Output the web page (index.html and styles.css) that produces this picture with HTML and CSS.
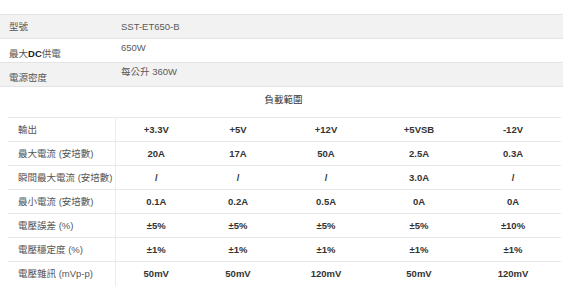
FILE: index.html
```html
<!DOCTYPE html>
<html lang="zh-Hant">
<head>
<meta charset="utf-8">
<title>SST-ET650-B</title>
<link rel="stylesheet" href="styles.css">
</head>
<body>
<div class="page">
  <table class="spec">
    <tr class="gray">
      <td class="label">型號</td>
      <td class="value">SST-ET650-B</td>
    </tr>
    <tr>
      <td class="label down">最大<b>DC</b>供電</td>
      <td class="value up">650W</td>
    </tr>
    <tr class="gray">
      <td class="label down">電源密度</td>
      <td class="value up">每公升 360W</td>
    </tr>
  </table>

  <div class="caption">負載範圍</div>

  <table class="load">
    <colgroup>
      <col class="c1"><col class="c2"><col class="c3"><col class="c4"><col class="c5"><col class="c6">
    </colgroup>
    <tr><td>輸出</td><td>+3.3V</td><td>+5V</td><td>+12V</td><td>+5VSB</td><td>-12V</td></tr>
    <tr><td>最大電流 (安培數)</td><td>20A</td><td>17A</td><td>50A</td><td>2.5A</td><td>0.3A</td></tr>
    <tr><td>瞬間最大電流 (安培數)</td><td>/</td><td>/</td><td>/</td><td>3.0A</td><td>/</td></tr>
    <tr><td>最小電流 (安培數)</td><td>0.1A</td><td>0.2A</td><td>0.5A</td><td>0A</td><td>0A</td></tr>
    <tr><td>電壓誤差 (%)</td><td>±5%</td><td>±5%</td><td>±5%</td><td>±5%</td><td>±10%</td></tr>
    <tr><td>電壓穩定度 (%)</td><td>±1%</td><td>±1%</td><td>±1%</td><td>±1%</td><td>±1%</td></tr>
    <tr><td>電壓雜訊 (mVp-p)</td><td>50mV</td><td>50mV</td><td>120mV</td><td>50mV</td><td>120mV</td></tr>
  </table>
</div>
</body>
</html>
```

FILE: styles.css
```css
html, body {
  margin: 0;
  padding: 0;
  background: #ffffff;
}

body {
  font-family: "Liberation Sans", Arial, "Noto Sans CJK TC", sans-serif;
  font-size: 9.5px;
  color: #555555;
}

.page {
  width: 563px;
  padding-top: 14px;
}

table {
  border-collapse: collapse;
  border-spacing: 0;
}

.spec {
  width: 563px;
  border-top: 1px solid #e4e4e4;
}

.spec tr {
  height: 24px;
  border-bottom: 1px solid #e4e4e4;
}

.spec tr.gray {
  background: #f2f2f2;
}

.spec td {
  padding: 0;
  line-height: 11px;
  vertical-align: top;
  padding-top: 6px;
  padding-bottom: 6px;
}

.spec .label {
  width: 111px;
  padding-left: 9px;
  color: #555555;
}

.spec .label b {
  color: #222222;
  font-weight: bold;
}

.spec .value {
  padding-left: 1px;
  color: #5a5a5a;
}

.spec .down {
  padding-top: 9px;
  padding-bottom: 3px;
}

.spec .up {
  padding-top: 3px;
  padding-bottom: 9px;
}

.caption {
  height: 30px;
  line-height: 25px;
  text-align: center;
  padding-left: 4px;
  color: #333333;
}

.load {
  margin-left: 8px;
  width: 553px;
  table-layout: fixed;
  border-top: 1px solid #e8e8e8;
}

.load col.c1 { width: 107px; }
.load col.c2 { width: 82px; }
.load col.c3 { width: 82px; }
.load col.c4 { width: 94px; }
.load col.c5 { width: 92px; }
.load col.c6 { width: 96px; }

.load tr {
  height: 24px;
  border-bottom: 1px solid #e8e8e8;
}

.load tr:last-child {
  border-bottom: none;
}

.load td {
  padding: 0;
  line-height: 11px;
  text-align: center;
  font-weight: bold;
  color: #333333;
  white-space: nowrap;
}

.load td:first-child {
  text-align: left;
  padding-left: 10px;
  font-weight: normal;
  color: #555555;
  border-right: 1px solid #ededed;
}
```
